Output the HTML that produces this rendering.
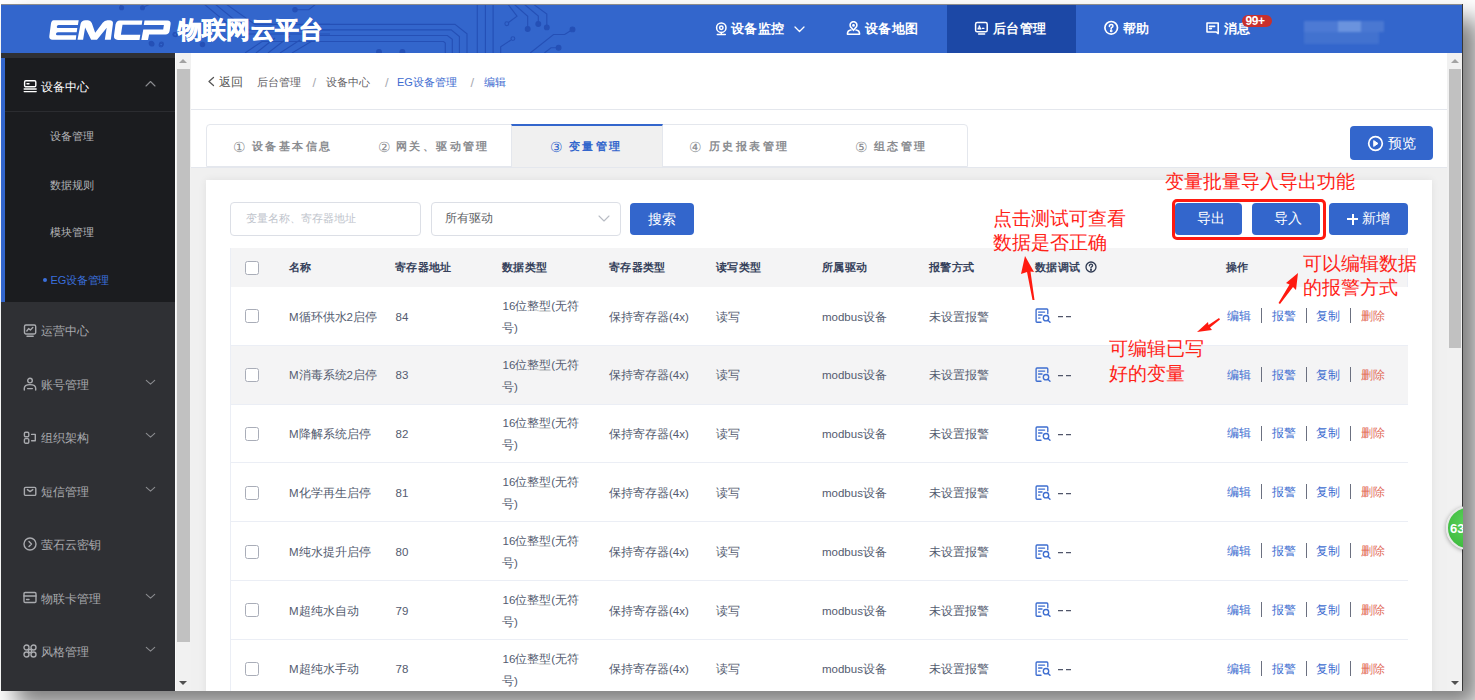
<!DOCTYPE html><html><head><meta charset="utf-8"><style>
*{box-sizing:border-box;margin:0;padding:0}
html,body{width:1475px;height:700px;overflow:hidden;background:#fff;font-family:"Liberation Sans",sans-serif}
.a{position:absolute}
.t{position:absolute;white-space:nowrap;line-height:1}
#shadow{left:1px;top:4px;width:1462px;height:687px;box-shadow:15px 15px 22px rgba(0,0,0,.5);background:#f0f0f0}
#hdr{left:1px;top:4px;width:1462px;height:49px;background:#3366cc;border-top:1px solid #8c8c8c;overflow:hidden}
#rline{left:1462px;top:4px;width:1px;height:687px;background:#383838}
.nav{color:#fff;font-size:12.5px;font-weight:bold;letter-spacing:0.4px}
#side{left:1px;top:53px;width:174px;height:638px;background:#2f3034}
#sub{left:1px;top:58px;width:174px;height:244px;background:#1b1c1f}
#sblue{left:1px;top:58px;width:4px;height:244px;background:#3366cc}
.si{color:#b4b5b8;font-size:11px}
.mi{color:#a9aaae;font-size:12px}
.sb{background:#f1f1f1}
.thumb{background:#c1c1c1}
#bc{left:191px;top:53px;width:1256px;height:57px;background:#fff;border-bottom:1px solid #e4e7ed}
#tabrow{left:191px;top:110px;width:1256px;height:58px;background:#fff;border-bottom:1px solid #e4e7ed}
#card{left:206px;top:180px;width:1226px;height:520px;background:#fff;box-shadow:0 0 8px rgba(0,0,0,.07)}
.tabt{color:#8a8c90;font-size:11px;font-weight:bold;letter-spacing:2.4px}
.btn{position:absolute;background:#3366cc;border-radius:4px;color:#fff}
.th{color:#36415b;font-size:11px;font-weight:bold;letter-spacing:0.3px}
.td{color:#535b6f;font-size:11.5px}
.cb{position:absolute;width:14px;height:14px;border:1px solid #a9adb8;border-radius:2.5px;background:#fff}
.red{color:#ff2318;font-size:19px;font-weight:500}
.op{color:#3d6dd0;font-size:11.5px}
.opd{color:#e26a57;font-size:11.5px}
.vsep{position:absolute;width:1px;height:15px;background:#6b7080}
</style></head><body>
<div id="shadow" class="a"></div>
<div class="a" style="left:0;top:0;width:1463px;height:691px;overflow:hidden">
<div id="hdr" class="a">
<svg class="a" style="left:-1px;top:-5px" width="1463" height="53" viewBox="0 0 1463 53" fill="none" stroke="#2550b6" stroke-width="1.15">
<path d="M204 4 L240 34 L330 34"/><path d="M215 4 L247 30 L330 30"/><path d="M226 4 L255 24.4 L330 24.4"/>
<path d="M245 53 L262 41.5 L323 41.5"/><path d="M256 53 L275 38"/><path d="M268 53 L290 36"/><path d="M280 53 L300 40"/><path d="M292 53 L312 41"/>
<path d="M323 41.5 H443.6 L445.3 43.1 V53"/><path d="M320 35.5 H447.4 L452.3 39.3 V53"/><path d="M320 29.8 H451.2 L459.4 36.6 V53"/><path d="M320 24.4 H455 L467 33.9 V53"/>
<path d="M477.3 4 V53"/><path d="M485.4 4 V53"/><path d="M493.1 4 V53"/>
<path d="M295 9.7 H308.7 L316 4"/>
<path d="M507.8 4 L517 16.2 L508.5 22.5"/><path d="M513.9 4 L527.7 16.2 V29"/><path d="M524 4 L538.3 16 V24"/><path d="M533.2 4 L546.8 14 V27.4"/>
<path d="M530.2 53 L553.5 34.5 H564.7 L572.5 29.4"/><path d="M511 40 L500.7 46.7 V53"/><path d="M544.4 53 L551 47.7 H558.6"/>
<path d="M120 4 L121.6 7.8 M142.5 7.8 L150 4"/>
</svg>
<svg class="a" style="left:-1px;top:-5px" width="1463" height="53" viewBox="0 0 1463 53" fill="#2550b6" stroke="#2550b6" stroke-width="1.1">
<circle cx="527.7" cy="29" r="2.4"/><circle cx="538.3" cy="24" r="2.4"/><circle cx="546.8" cy="27.4" r="2.4"/><circle cx="572.5" cy="29.4" r="2.4"/><circle cx="558.6" cy="47.7" r="2.4"/>
<circle cx="295" cy="9.7" r="2.2"/><circle cx="202.5" cy="44.5" r="2.2"/><circle cx="151.2" cy="43.3" r="2"/><circle cx="152" cy="44" r="2"/><circle cx="121.6" cy="7.8" r="2"/><circle cx="142.5" cy="7.8" r="2"/>
<circle cx="379" cy="52" r="2.4"/><circle cx="402.4" cy="52" r="2.4"/>
<circle cx="506.8" cy="23.7" r="1.9" fill="none"/><circle cx="512.9" cy="38.6" r="1.9" fill="none"/><circle cx="161" cy="45.1" r="1.9" fill="none"/><circle cx="175.6" cy="34.7" r="1.9" fill="none"/><circle cx="174.8" cy="34.4" r="1.9" fill="none"/><circle cx="161.5" cy="44" r="1.9" fill="none"/>
</svg>
<svg class="a" style="left:-1px;top:-5px" width="200" height="53" viewBox="0 0 200 53"><g fill="#fff">
<path d="M53.5 20.3 H78.7 L77.9 25 H58.5 Q57 25 56.8 26.5 Q56.6 28 58 28 H77.3 L76.7 32.2 H57.8 Q56.2 32.2 56 33.7 Q55.8 35.2 57.3 35.2 H76.3 L75.8 39.7 H52.5 Q49 39.7 49.3 36.3 L50.9 24 Q51.5 20.3 53.5 20.3 Z"/>
<path d="M77.5 39.7 L80.6 23.8 Q81.5 20.3 85.5 20.3 H88 Q90.5 20.3 91.8 23 L95.2 32.8 L102.7 22.8 Q104.5 20.3 107.5 20.3 H109.5 Q113.5 20.3 112.9 24 L110.8 39.7 H104.8 L106.7 27.8 L97 39.7 H91.1 L85.1 27.4 L83.1 39.7 Z"/>
<path d="M119.7 20.4 H142.4 L141.7 24.8 H122.5 L120.9 34.7 H140.3 L139.5 39.9 H118 Q113.5 39.9 114 35.5 L115.5 24.6 Q116.5 20.4 119.7 20.4 Z"/>
<path d="M144.5 20.4 H167.5 Q171 20.4 170.6 24 L169.6 31 Q169 34.4 165.5 34.4 H149.1 L148 39.9 H141.3 L143.3 29.6 H163.2 L163.9 25 H143.8 Z"/>
</g></svg>
<div class="t " style="left:177px;top:13.2px;color:#fff;font-weight:700;font-size:24px;letter-spacing:0.2px;-webkit-text-stroke:0.6px #fff">物联网云平台</div>
<div class="a" style="left:946px;top:0;width:129px;height:48px;background:#1c48a6"></div>
</div>
<div id="rline" class="a"></div>
<svg class="a" style="left:715px;top:21px" width="13" height="15" viewBox="0 0 13 15" fill="none" stroke="#fff" stroke-width="1.5" stroke-linecap="round" stroke-linejoin="round"><circle cx="6.3" cy="6.7" r="4.7"/><circle cx="6.3" cy="6.7" r="1.7"/><path d="M6.3 11.4 V13.3 M2.3 13.4 H10.3"/></svg>
<div class="t nav" style="left:731px;top:22.5px;">设备监控</div>
<svg class="a" style="left:794px;top:26px" width="11" height="7" viewBox="0 0 11 7" fill="none" stroke="#fff" stroke-width="1.3" stroke-linecap="round" stroke-linejoin="round"><path d="M1 1 L5.5 5.5 L10 1"/></svg>
<svg class="a" style="left:846px;top:21px" width="15" height="15" viewBox="0 0 15 15" fill="none" stroke="#fff" stroke-width="1.6" stroke-linecap="round" stroke-linejoin="round"><path d="M7.5 9.3 L5.2 6.6 A3.4 3.4 0 1 1 9.8 6.6 Z"/><circle cx="7.5" cy="4.4" r="0.6" fill="#fff"/><path d="M5 9 Q1.5 9.5 1.5 12.5 V13.3 H13.5 V12.5 Q13.5 9.5 10 9"/></svg>
<div class="t nav" style="left:865px;top:22.5px;">设备地图</div>
<svg class="a" style="left:974px;top:21px" width="15" height="15" viewBox="0 0 15 15" fill="none" stroke="#fff" stroke-width="1.5" stroke-linecap="round" stroke-linejoin="round"><rect x="1.6" y="1.6" width="11.6" height="9.2" rx="1.6"/><path d="M4.6 13.1 H10.6"/><circle cx="5.4" cy="5.2" r="0.9" fill="#fff" stroke="none"/><path d="M4 8 Q4 6.6 5.4 6.6 Q6.8 6.6 6.8 8 Z M8.3 7.3 H10" stroke-width="1.2"/></svg>
<div class="t nav" style="left:993px;top:22.5px;">后台管理</div>
<svg class="a" style="left:1103px;top:20px" width="16" height="16" viewBox="0 0 16 16" fill="none" stroke="#fff" stroke-width="1.7" stroke-linecap="round" stroke-linejoin="round"><circle cx="8.2" cy="7.8" r="6.3"/><path d="M6.4 6.4 Q6.4 4.6 8.2 4.6 Q10 4.6 10 6.1 Q10 7.2 8.2 7.9 V8.9" stroke-width="1.5"/><circle cx="8.2" cy="10.9" r="0.5" fill="#fff"/></svg>
<div class="t nav" style="left:1123px;top:22.5px;">帮助</div>
<svg class="a" style="left:1205px;top:21px" width="15" height="15" viewBox="0 0 15 15" fill="none" stroke="#fff" stroke-width="1.6" stroke-linecap="round" stroke-linejoin="round"><path d="M2 2 H13.2 V12.6 L11.2 11 H2 Z"/><path d="M4.6 5.4 H9.6 M4.6 7.6 H6.4"/></svg>
<div class="t nav" style="left:1224px;top:22.5px;">消息</div>
<div class="a" style="left:1242px;top:14.5px;width:30px;height:12.5px;border-radius:6px;background:#c9302c"></div>
<div class="t " style="left:1245.5px;top:14.8px;color:#fff;font-size:12px;font-weight:bold;letter-spacing:-0.4px">99+</div>
<div class="a" style="left:1304px;top:21px;width:80px;height:24px;filter:blur(1px)">
<div class="a" style="left:0;top:0;width:80px;height:11px;background:#4d7ad4"></div>
<div class="a" style="left:34px;top:0;width:23px;height:11px;background:#6a93de"></div>
<div class="a" style="left:57px;top:0;width:23px;height:11px;background:#4a78d2"></div>
<div class="a" style="left:0;top:11px;width:75px;height:12px;background:#4272cf"></div>
</div>
<div id="side" class="a"></div><div id="sub" class="a"></div>
<div class="a" style="left:1px;top:111px;width:174px;height:1px;background:#2b2c30"></div>
<div id="sblue" class="a"></div>
<svg class="a" style="left:23px;top:79px" width="14" height="14" viewBox="0 0 14 14" fill="none" stroke="#fff" stroke-width="1.4" stroke-linecap="round" stroke-linejoin="round"><rect x="1.6" y="1.8" width="11.2" height="6" rx="1.2"/><path d="M4 4.8 H6 M1.2 10 H13.2 M1.2 12.6 H13.2"/></svg>
<div class="t " style="left:41px;top:80.8px;color:#fff;font-size:12px;font-weight:500">设备中心</div>
<svg class="a" style="left:145px;top:80px" width="11" height="7" viewBox="0 0 11 7" fill="none" stroke="#8b8c90" stroke-width="1.1" stroke-linecap="round" stroke-linejoin="round"><path d="M1 6 L5.5 1.5 L10 6"/></svg>
<div class="t si" style="left:50px;top:130.7px;">设备管理</div>
<div class="t si" style="left:50px;top:179.7px;">数据规则</div>
<div class="t si" style="left:50px;top:227.0px;">模块管理</div>
<div class="a" style="left:43px;top:278px;width:4px;height:4px;border-radius:2px;background:#3a6fdc"></div>
<div class="t " style="left:50.5px;top:275.0px;color:#3a6fdc;font-size:11px;letter-spacing:-0.2px">EG设备管理</div>
<svg class="a" style="left:23px;top:323px" width="14" height="14" viewBox="0 0 14 14" fill="none" stroke="#a9aaae" stroke-width="1.4" stroke-linecap="round" stroke-linejoin="round"><rect x="1.5" y="2" width="11.2" height="9" rx="1.4"/><path d="M3.8 8 L5.6 5.6 L7.4 7 L9.8 4.6 M4 13.3 H10.2"/></svg>
<div class="t mi" style="left:41px;top:324.6px;">运营中心</div>
<svg class="a" style="left:23px;top:377px" width="14" height="14" viewBox="0 0 14 14" fill="none" stroke="#a9aaae" stroke-width="1.4" stroke-linecap="round" stroke-linejoin="round"><circle cx="7" cy="3.6" r="2.3"/><path d="M1.3 13 V11.2 Q1.3 7.6 7 7.6 Q12.7 7.6 12.7 11.2 V13 M4.6 11.6 H9.4"/></svg>
<div class="t mi" style="left:41px;top:378.6px;">账号管理</div>
<svg class="a" style="left:145px;top:379px" width="11" height="7" viewBox="0 0 11 7" fill="none" stroke="#8b8c90" stroke-width="1.1" stroke-linecap="round" stroke-linejoin="round"><path d="M1.3 1.4 L5.5 5.1 L9.7 1.4"/></svg>
<svg class="a" style="left:23px;top:430px" width="14" height="14" viewBox="0 0 14 14" fill="none" stroke="#a9aaae" stroke-width="1.4" stroke-linecap="round" stroke-linejoin="round"><rect x="1.4" y="2.2" width="4.4" height="4.6" rx="1.2"/><rect x="1.4" y="8.6" width="4.4" height="4.6" rx="1.2"/><path d="M8.6 4.4 H12.3 V10.8 H8.6"/></svg>
<div class="t mi" style="left:41px;top:431.6px;">组织架构</div>
<svg class="a" style="left:145px;top:432px" width="11" height="7" viewBox="0 0 11 7" fill="none" stroke="#8b8c90" stroke-width="1.1" stroke-linecap="round" stroke-linejoin="round"><path d="M1.3 1.4 L5.5 5.1 L9.7 1.4"/></svg>
<svg class="a" style="left:23px;top:484px" width="14" height="14" viewBox="0 0 14 14" fill="none" stroke="#a9aaae" stroke-width="1.4" stroke-linecap="round" stroke-linejoin="round"><rect x="1.4" y="3.4" width="11.4" height="8" rx="1.2"/><path d="M4.4 5.6 L7.1 7.6 L9.8 5.6"/></svg>
<div class="t mi" style="left:41px;top:485.6px;">短信管理</div>
<svg class="a" style="left:145px;top:486px" width="11" height="7" viewBox="0 0 11 7" fill="none" stroke="#8b8c90" stroke-width="1.1" stroke-linecap="round" stroke-linejoin="round"><path d="M1.3 1.4 L5.5 5.1 L9.7 1.4"/></svg>
<svg class="a" style="left:23px;top:537px" width="14" height="14" viewBox="0 0 14 14" fill="none" stroke="#a9aaae" stroke-width="1.4" stroke-linecap="round" stroke-linejoin="round"><circle cx="7" cy="7" r="6"/><path d="M6 4.5 L8.5 7 L6 9.5"/></svg>
<div class="t mi" style="left:41px;top:538.6px;">萤石云密钥</div>
<svg class="a" style="left:23px;top:591px" width="14" height="14" viewBox="0 0 14 14" fill="none" stroke="#a9aaae" stroke-width="1.4" stroke-linecap="round" stroke-linejoin="round"><rect x="1" y="1.5" width="12" height="10" rx="1.2"/><path d="M1 5 H13 M3.5 8.5 H6"/></svg>
<div class="t mi" style="left:41px;top:592.6px;">物联卡管理</div>
<svg class="a" style="left:145px;top:593px" width="11" height="7" viewBox="0 0 11 7" fill="none" stroke="#8b8c90" stroke-width="1.1" stroke-linecap="round" stroke-linejoin="round"><path d="M1.3 1.4 L5.5 5.1 L9.7 1.4"/></svg>
<svg class="a" style="left:23px;top:644px" width="14" height="14" viewBox="0 0 14 14" fill="none" stroke="#a9aaae" stroke-width="1.4" stroke-linecap="round" stroke-linejoin="round"><circle cx="3.5" cy="3.5" r="2.5"/><circle cx="10.5" cy="3.5" r="2.5"/><circle cx="3.5" cy="10.5" r="2.5"/><circle cx="10.5" cy="10.5" r="2.5"/><rect x="5.5" y="5.5" width="3" height="3"/></svg>
<div class="t mi" style="left:41px;top:645.6px;">风格管理</div>
<svg class="a" style="left:145px;top:646px" width="11" height="7" viewBox="0 0 11 7" fill="none" stroke="#8b8c90" stroke-width="1.1" stroke-linecap="round" stroke-linejoin="round"><path d="M1.3 1.4 L5.5 5.1 L9.7 1.4"/></svg>
<div class="a sb" style="left:175px;top:53px;width:16px;height:638px;border-left:1px solid #fafafa"></div>
<div class="a thumb" style="left:177px;top:69px;width:13px;height:573px"></div>
<div class="a" style="left:179px;top:59px;width:0;height:0;border-left:4px solid transparent;border-right:4px solid transparent;border-bottom:4px solid #a3a3a3"></div>
<div class="a" style="left:179px;top:681px;width:0;height:0;border-left:4px solid transparent;border-right:4px solid transparent;border-top:4px solid #505050"></div>
<div class="a" style="left:191px;top:53px;width:1256px;height:638px;background:#f0f0f0"></div>
<div id="bc" class="a"></div>
<div id="tabrow" class="a"></div>
<svg class="a" style="left:207px;top:76px" width="8" height="11" viewBox="0 0 8 11" fill="none" stroke="#555" stroke-width="1.3" stroke-linecap="round" stroke-linejoin="round"><path d="M6.5 1.5 L2 5.5 L6.5 9.5"/></svg>
<div class="t " style="left:218.5px;top:76.0px;color:#555;font-size:12px">返回</div>
<div class="t " style="left:257px;top:77.0px;color:#5f6064;font-size:11px">后台管理</div>
<div class="t " style="left:312.5px;top:75.5px;color:#a8abb2;font-size:13px">/</div>
<div class="t " style="left:325.5px;top:77.0px;color:#5f6064;font-size:11px">设备中心</div>
<div class="t " style="left:385px;top:75.5px;color:#a8abb2;font-size:13px">/</div>
<div class="t " style="left:397px;top:77.0px;color:#3d6bd0;font-size:11px;letter-spacing:0px">EG设备管理</div>
<div class="t " style="left:470.5px;top:75.5px;color:#a8abb2;font-size:13px">/</div>
<div class="t " style="left:483.5px;top:77.0px;color:#3d6bd0;font-size:11px">编辑</div>
<div class="a" style="left:206px;top:124px;width:762px;height:43px;border:1px solid #e4e7ed;border-radius:4px 4px 0 0;background:#fff"></div>
<div class="a" style="left:511px;top:124px;width:152px;height:43px;background:#f0f0f0;border-top:2px solid #3366cc;border-left:1px solid #e4e7ed;border-right:1px solid #e4e7ed"></div>
<div class="t " style="left:232.5px;top:139.5px;color:#8a8c90;font-size:14px">①</div>
<div class="t tabt" style="left:252px;top:140.5px;color:#8a8c90">设备基本信息</div>
<div class="t " style="left:377.5px;top:139.5px;color:#8a8c90;font-size:14px">②</div>
<div class="t tabt" style="left:396px;top:140.5px;color:#8a8c90">网关、驱动管理</div>
<div class="t " style="left:549.5px;top:139.5px;color:#3366cc;font-size:14px">③</div>
<div class="t tabt" style="left:569px;top:140.5px;color:#3366cc">变量管理</div>
<div class="t " style="left:688.5px;top:139.5px;color:#8a8c90;font-size:14px">④</div>
<div class="t tabt" style="left:709px;top:140.5px;color:#8a8c90">历史报表管理</div>
<div class="t " style="left:854.5px;top:139.5px;color:#8a8c90;font-size:14px">⑤</div>
<div class="t tabt" style="left:874px;top:140.5px;color:#8a8c90">组态管理</div>
<div class="btn" style="left:1350px;top:126px;width:83px;height:34px"></div>
<svg class="a" style="left:1367px;top:135px" width="17" height="17" viewBox="0 0 17 17" fill="none" stroke="#fff" stroke-width="1.7" stroke-linecap="round" stroke-linejoin="round"><circle cx="8.5" cy="8.5" r="6.8"/><path d="M7 5.8 L11 8.5 L7 11.2 Z" fill="#fff" stroke-width="1"/></svg>
<div class="t " style="left:1388px;top:136.0px;color:#fff;font-size:14px">预览</div>
<div id="card" class="a"></div>
<div class="a" style="left:230px;top:202px;width:191px;height:34px;border:1px solid #dcdfe6;border-radius:4px;background:#fff"></div>
<div class="t " style="left:245.5px;top:213.3px;color:#c0c4cc;font-size:11.3px">变量名称、寄存器地址</div>
<div class="a" style="left:431px;top:202px;width:190px;height:34px;border:1px solid #dcdfe6;border-radius:4px;background:#fff"></div>
<div class="t " style="left:445px;top:213.0px;color:#606266;font-size:11.5px">所有驱动</div>
<svg class="a" style="left:598px;top:215px" width="12" height="7" viewBox="0 0 12 7" fill="none" stroke="#b8bcc4" stroke-width="1.1" stroke-linecap="round" stroke-linejoin="round"><path d="M1 1 L6 6 L11 1"/></svg>
<div class="btn" style="left:630px;top:203px;width:64px;height:32px"></div>
<div class="t " style="left:648px;top:212.0px;color:#fff;font-size:14px">搜索</div>
<div class="btn" style="left:1175px;top:203px;width:67px;height:32px"></div>
<div class="t " style="left:1197px;top:211.6px;color:#fff;font-size:13.5px">导出</div>
<div class="btn" style="left:1252px;top:203px;width:68px;height:32px"></div>
<div class="t " style="left:1274px;top:211.6px;color:#fff;font-size:13.5px">导入</div>
<div class="btn" style="left:1329px;top:203px;width:79px;height:32px"></div>
<div class="a" style="left:1347px;top:218px;width:11px;height:2px;background:#fff"></div><div class="a" style="left:1351.5px;top:213.5px;width:2px;height:11px;background:#fff"></div>
<div class="t " style="left:1362px;top:211.6px;color:#fff;font-size:13.5px">新增</div>
<div class="a" style="left:230px;top:248px;width:1178px;height:39px;background:#f4f4f5"></div>
<div class="a" style="left:230px;top:248px;width:1px;height:443px;background:#ebeef5"></div>
<div class="a" style="left:1407px;top:248px;width:1px;height:443px;background:#ebeef5"></div>
<div class="cb" style="left:245px;top:261px"></div>
<div class="t th" style="left:289px;top:262.4px;">名称</div>
<div class="t th" style="left:395px;top:262.4px;">寄存器地址</div>
<div class="t th" style="left:502px;top:262.4px;">数据类型</div>
<div class="t th" style="left:609px;top:262.4px;">寄存器类型</div>
<div class="t th" style="left:716px;top:262.4px;">读写类型</div>
<div class="t th" style="left:822px;top:262.4px;">所属驱动</div>
<div class="t th" style="left:929px;top:262.4px;">报警方式</div>
<div class="t th" style="left:1035px;top:262.4px;">数据调试</div>
<div class="t th" style="left:1226px;top:262.4px;">操作</div>
<svg class="a" style="left:1085.3px;top:261px" width="12" height="12" viewBox="0 0 12 12" fill="none" stroke="#2f3a52" stroke-width="1.3" stroke-linecap="round" stroke-linejoin="round"><circle cx="6" cy="6" r="5"/><path d="M4.4 4.8 Q4.4 3.2 6 3.2 Q7.6 3.2 7.6 4.6 Q7.6 5.6 6 6.3 V7.1"/><circle cx="6" cy="8.9" r="0.4" fill="#2f3a52"/></svg>
<div class="a" style="left:231px;top:287.0px;width:1177px;height:58.8px;background:#fff;border-bottom:1px solid #ebeef5"></div>
<div class="cb" style="left:245px;top:309.4px"></div>
<div class="t td" style="left:289px;top:311.5px;">M循环供水2启停</div>
<div class="t td" style="left:395.5px;top:311.5px;">84</div>
<div class="t td" style="left:502.5px;top:300.8px;">16位整型(无符</div>
<div class="t td" style="left:502px;top:322.7px;">号)</div>
<div class="t td" style="left:609px;top:311.6px;">保持寄存器(4x)</div>
<div class="t td" style="left:715.5px;top:311.6px;">读写</div>
<div class="t td" style="left:822px;top:311.6px;">modbus设备</div>
<div class="t td" style="left:928.5px;top:311.6px;">未设置报警</div>
<svg class="a" style="left:1035px;top:308.4px" width="16" height="16" viewBox="0 0 16 16" fill="none" stroke="#3d6dd0" stroke-width="1.35" stroke-linecap="round" stroke-linejoin="round"><path d="M12.8 5.8 V1.9 Q12.8 1 11.9 1 H2 Q1.1 1 1.1 1.9 V13.4 Q1.1 14.2 2 14.2 H6"/><path d="M3.6 4.1 H9.6 M3.6 7 H7 M3.6 10.1 H5"/><circle cx="11" cy="10.2" r="2.7"/><path d="M12.9 12.2 L15 14.3"/></svg>
<div class="a" style="left:1058px;top:316px;width:5px;height:1px;background:#50566a;box-shadow:0 0.5px 0 rgba(80,86,106,.5)"></div><div class="a" style="left:1066px;top:316px;width:5px;height:1px;background:#50566a;box-shadow:0 0.5px 0 rgba(80,86,106,.5)"></div>
<div class="t op" style="left:1226.5px;top:310.7px;">编辑</div>
<div class="vsep" style="left:1261px;top:307.9px"></div>
<div class="t op" style="left:1271.5px;top:310.7px;">报警</div>
<div class="vsep" style="left:1306px;top:307.9px"></div>
<div class="t op" style="left:1316px;top:310.7px;">复制</div>
<div class="vsep" style="left:1350px;top:307.9px"></div>
<div class="t opd" style="left:1361px;top:310.7px;">删除</div>
<div class="a" style="left:231px;top:345.8px;width:1177px;height:58.8px;background:#f4f4f5;border-bottom:1px solid #ebeef5"></div>
<div class="cb" style="left:245px;top:368.2px"></div>
<div class="t td" style="left:289px;top:370.3px;">M消毒系统2启停</div>
<div class="t td" style="left:395.5px;top:370.3px;">83</div>
<div class="t td" style="left:502.5px;top:359.6px;">16位整型(无符</div>
<div class="t td" style="left:502px;top:381.5px;">号)</div>
<div class="t td" style="left:609px;top:370.4px;">保持寄存器(4x)</div>
<div class="t td" style="left:715.5px;top:370.4px;">读写</div>
<div class="t td" style="left:822px;top:370.4px;">modbus设备</div>
<div class="t td" style="left:928.5px;top:370.4px;">未设置报警</div>
<svg class="a" style="left:1035px;top:367.2px" width="16" height="16" viewBox="0 0 16 16" fill="none" stroke="#3d6dd0" stroke-width="1.35" stroke-linecap="round" stroke-linejoin="round"><path d="M12.8 5.8 V1.9 Q12.8 1 11.9 1 H2 Q1.1 1 1.1 1.9 V13.4 Q1.1 14.2 2 14.2 H6"/><path d="M3.6 4.1 H9.6 M3.6 7 H7 M3.6 10.1 H5"/><circle cx="11" cy="10.2" r="2.7"/><path d="M12.9 12.2 L15 14.3"/></svg>
<div class="a" style="left:1058px;top:375px;width:5px;height:1px;background:#50566a;box-shadow:0 0.5px 0 rgba(80,86,106,.5)"></div><div class="a" style="left:1066px;top:375px;width:5px;height:1px;background:#50566a;box-shadow:0 0.5px 0 rgba(80,86,106,.5)"></div>
<div class="t op" style="left:1226.5px;top:369.5px;">编辑</div>
<div class="vsep" style="left:1261px;top:366.7px"></div>
<div class="t op" style="left:1271.5px;top:369.5px;">报警</div>
<div class="vsep" style="left:1306px;top:366.7px"></div>
<div class="t op" style="left:1316px;top:369.5px;">复制</div>
<div class="vsep" style="left:1350px;top:366.7px"></div>
<div class="t opd" style="left:1361px;top:369.5px;">删除</div>
<div class="a" style="left:231px;top:404.6px;width:1177px;height:58.8px;background:#fff;border-bottom:1px solid #ebeef5"></div>
<div class="cb" style="left:245px;top:427.0px"></div>
<div class="t td" style="left:289px;top:429.1px;">M降解系统启停</div>
<div class="t td" style="left:395.5px;top:429.1px;">82</div>
<div class="t td" style="left:502.5px;top:418.4px;">16位整型(无符</div>
<div class="t td" style="left:502px;top:440.3px;">号)</div>
<div class="t td" style="left:609px;top:429.2px;">保持寄存器(4x)</div>
<div class="t td" style="left:715.5px;top:429.2px;">读写</div>
<div class="t td" style="left:822px;top:429.2px;">modbus设备</div>
<div class="t td" style="left:928.5px;top:429.2px;">未设置报警</div>
<svg class="a" style="left:1035px;top:426.0px" width="16" height="16" viewBox="0 0 16 16" fill="none" stroke="#3d6dd0" stroke-width="1.35" stroke-linecap="round" stroke-linejoin="round"><path d="M12.8 5.8 V1.9 Q12.8 1 11.9 1 H2 Q1.1 1 1.1 1.9 V13.4 Q1.1 14.2 2 14.2 H6"/><path d="M3.6 4.1 H9.6 M3.6 7 H7 M3.6 10.1 H5"/><circle cx="11" cy="10.2" r="2.7"/><path d="M12.9 12.2 L15 14.3"/></svg>
<div class="a" style="left:1058px;top:434px;width:5px;height:1px;background:#50566a;box-shadow:0 0.5px 0 rgba(80,86,106,.5)"></div><div class="a" style="left:1066px;top:434px;width:5px;height:1px;background:#50566a;box-shadow:0 0.5px 0 rgba(80,86,106,.5)"></div>
<div class="t op" style="left:1226.5px;top:428.3px;">编辑</div>
<div class="vsep" style="left:1261px;top:425.5px"></div>
<div class="t op" style="left:1271.5px;top:428.3px;">报警</div>
<div class="vsep" style="left:1306px;top:425.5px"></div>
<div class="t op" style="left:1316px;top:428.3px;">复制</div>
<div class="vsep" style="left:1350px;top:425.5px"></div>
<div class="t opd" style="left:1361px;top:428.3px;">删除</div>
<div class="a" style="left:231px;top:463.4px;width:1177px;height:58.8px;background:#fff;border-bottom:1px solid #ebeef5"></div>
<div class="cb" style="left:245px;top:485.8px"></div>
<div class="t td" style="left:289px;top:487.9px;">M化学再生启停</div>
<div class="t td" style="left:395.5px;top:487.9px;">81</div>
<div class="t td" style="left:502.5px;top:477.2px;">16位整型(无符</div>
<div class="t td" style="left:502px;top:499.1px;">号)</div>
<div class="t td" style="left:609px;top:488.0px;">保持寄存器(4x)</div>
<div class="t td" style="left:715.5px;top:488.0px;">读写</div>
<div class="t td" style="left:822px;top:488.0px;">modbus设备</div>
<div class="t td" style="left:928.5px;top:488.0px;">未设置报警</div>
<svg class="a" style="left:1035px;top:484.79999999999995px" width="16" height="16" viewBox="0 0 16 16" fill="none" stroke="#3d6dd0" stroke-width="1.35" stroke-linecap="round" stroke-linejoin="round"><path d="M12.8 5.8 V1.9 Q12.8 1 11.9 1 H2 Q1.1 1 1.1 1.9 V13.4 Q1.1 14.2 2 14.2 H6"/><path d="M3.6 4.1 H9.6 M3.6 7 H7 M3.6 10.1 H5"/><circle cx="11" cy="10.2" r="2.7"/><path d="M12.9 12.2 L15 14.3"/></svg>
<div class="a" style="left:1058px;top:493px;width:5px;height:1px;background:#50566a;box-shadow:0 0.5px 0 rgba(80,86,106,.5)"></div><div class="a" style="left:1066px;top:493px;width:5px;height:1px;background:#50566a;box-shadow:0 0.5px 0 rgba(80,86,106,.5)"></div>
<div class="t op" style="left:1226.5px;top:487.1px;">编辑</div>
<div class="vsep" style="left:1261px;top:484.3px"></div>
<div class="t op" style="left:1271.5px;top:487.1px;">报警</div>
<div class="vsep" style="left:1306px;top:484.3px"></div>
<div class="t op" style="left:1316px;top:487.1px;">复制</div>
<div class="vsep" style="left:1350px;top:484.3px"></div>
<div class="t opd" style="left:1361px;top:487.1px;">删除</div>
<div class="a" style="left:231px;top:522.2px;width:1177px;height:58.8px;background:#fff;border-bottom:1px solid #ebeef5"></div>
<div class="cb" style="left:245px;top:544.6px"></div>
<div class="t td" style="left:289px;top:546.7px;">M纯水提升启停</div>
<div class="t td" style="left:395.5px;top:546.7px;">80</div>
<div class="t td" style="left:502.5px;top:536.0px;">16位整型(无符</div>
<div class="t td" style="left:502px;top:557.9px;">号)</div>
<div class="t td" style="left:609px;top:546.8px;">保持寄存器(4x)</div>
<div class="t td" style="left:715.5px;top:546.8px;">读写</div>
<div class="t td" style="left:822px;top:546.8px;">modbus设备</div>
<div class="t td" style="left:928.5px;top:546.8px;">未设置报警</div>
<svg class="a" style="left:1035px;top:543.6px" width="16" height="16" viewBox="0 0 16 16" fill="none" stroke="#3d6dd0" stroke-width="1.35" stroke-linecap="round" stroke-linejoin="round"><path d="M12.8 5.8 V1.9 Q12.8 1 11.9 1 H2 Q1.1 1 1.1 1.9 V13.4 Q1.1 14.2 2 14.2 H6"/><path d="M3.6 4.1 H9.6 M3.6 7 H7 M3.6 10.1 H5"/><circle cx="11" cy="10.2" r="2.7"/><path d="M12.9 12.2 L15 14.3"/></svg>
<div class="a" style="left:1058px;top:552px;width:5px;height:1px;background:#50566a;box-shadow:0 0.5px 0 rgba(80,86,106,.5)"></div><div class="a" style="left:1066px;top:552px;width:5px;height:1px;background:#50566a;box-shadow:0 0.5px 0 rgba(80,86,106,.5)"></div>
<div class="t op" style="left:1226.5px;top:545.9px;">编辑</div>
<div class="vsep" style="left:1261px;top:543.1px"></div>
<div class="t op" style="left:1271.5px;top:545.9px;">报警</div>
<div class="vsep" style="left:1306px;top:543.1px"></div>
<div class="t op" style="left:1316px;top:545.9px;">复制</div>
<div class="vsep" style="left:1350px;top:543.1px"></div>
<div class="t opd" style="left:1361px;top:545.9px;">删除</div>
<div class="a" style="left:231px;top:581.0px;width:1177px;height:58.8px;background:#fff;border-bottom:1px solid #ebeef5"></div>
<div class="cb" style="left:245px;top:603.4px"></div>
<div class="t td" style="left:289px;top:605.5px;">M超纯水自动</div>
<div class="t td" style="left:395.5px;top:605.5px;">79</div>
<div class="t td" style="left:502.5px;top:594.8px;">16位整型(无符</div>
<div class="t td" style="left:502px;top:616.7px;">号)</div>
<div class="t td" style="left:609px;top:605.6px;">保持寄存器(4x)</div>
<div class="t td" style="left:715.5px;top:605.6px;">读写</div>
<div class="t td" style="left:822px;top:605.6px;">modbus设备</div>
<div class="t td" style="left:928.5px;top:605.6px;">未设置报警</div>
<svg class="a" style="left:1035px;top:602.4px" width="16" height="16" viewBox="0 0 16 16" fill="none" stroke="#3d6dd0" stroke-width="1.35" stroke-linecap="round" stroke-linejoin="round"><path d="M12.8 5.8 V1.9 Q12.8 1 11.9 1 H2 Q1.1 1 1.1 1.9 V13.4 Q1.1 14.2 2 14.2 H6"/><path d="M3.6 4.1 H9.6 M3.6 7 H7 M3.6 10.1 H5"/><circle cx="11" cy="10.2" r="2.7"/><path d="M12.9 12.2 L15 14.3"/></svg>
<div class="a" style="left:1058px;top:610px;width:5px;height:1px;background:#50566a;box-shadow:0 0.5px 0 rgba(80,86,106,.5)"></div><div class="a" style="left:1066px;top:610px;width:5px;height:1px;background:#50566a;box-shadow:0 0.5px 0 rgba(80,86,106,.5)"></div>
<div class="t op" style="left:1226.5px;top:604.7px;">编辑</div>
<div class="vsep" style="left:1261px;top:601.9px"></div>
<div class="t op" style="left:1271.5px;top:604.7px;">报警</div>
<div class="vsep" style="left:1306px;top:601.9px"></div>
<div class="t op" style="left:1316px;top:604.7px;">复制</div>
<div class="vsep" style="left:1350px;top:601.9px"></div>
<div class="t opd" style="left:1361px;top:604.7px;">删除</div>
<div class="a" style="left:231px;top:639.8px;width:1177px;height:58.8px;background:#fff;border-bottom:1px solid #ebeef5"></div>
<div class="cb" style="left:245px;top:662.2px"></div>
<div class="t td" style="left:289px;top:664.3px;">M超纯水手动</div>
<div class="t td" style="left:395.5px;top:664.3px;">78</div>
<div class="t td" style="left:502.5px;top:653.6px;">16位整型(无符</div>
<div class="t td" style="left:502px;top:675.5px;">号)</div>
<div class="t td" style="left:609px;top:664.4px;">保持寄存器(4x)</div>
<div class="t td" style="left:715.5px;top:664.4px;">读写</div>
<div class="t td" style="left:822px;top:664.4px;">modbus设备</div>
<div class="t td" style="left:928.5px;top:664.4px;">未设置报警</div>
<svg class="a" style="left:1035px;top:661.1999999999999px" width="16" height="16" viewBox="0 0 16 16" fill="none" stroke="#3d6dd0" stroke-width="1.35" stroke-linecap="round" stroke-linejoin="round"><path d="M12.8 5.8 V1.9 Q12.8 1 11.9 1 H2 Q1.1 1 1.1 1.9 V13.4 Q1.1 14.2 2 14.2 H6"/><path d="M3.6 4.1 H9.6 M3.6 7 H7 M3.6 10.1 H5"/><circle cx="11" cy="10.2" r="2.7"/><path d="M12.9 12.2 L15 14.3"/></svg>
<div class="a" style="left:1058px;top:669px;width:5px;height:1px;background:#50566a;box-shadow:0 0.5px 0 rgba(80,86,106,.5)"></div><div class="a" style="left:1066px;top:669px;width:5px;height:1px;background:#50566a;box-shadow:0 0.5px 0 rgba(80,86,106,.5)"></div>
<div class="t op" style="left:1226.5px;top:663.5px;">编辑</div>
<div class="vsep" style="left:1261px;top:660.7px"></div>
<div class="t op" style="left:1271.5px;top:663.5px;">报警</div>
<div class="vsep" style="left:1306px;top:660.7px"></div>
<div class="t op" style="left:1316px;top:663.5px;">复制</div>
<div class="vsep" style="left:1350px;top:660.7px"></div>
<div class="t opd" style="left:1361px;top:663.5px;">删除</div>
<div class="a sb" style="left:1447px;top:53px;width:15px;height:638px"></div>
<div class="a thumb" style="left:1449px;top:69px;width:12px;height:279px"></div>
<div class="a" style="left:1451px;top:59px;width:0;height:0;border-left:4px solid transparent;border-right:4px solid transparent;border-bottom:4px solid #a3a3a3"></div>
<div class="a" style="left:1451px;top:681px;width:0;height:0;border-left:4px solid transparent;border-right:4px solid transparent;border-top:4px solid #505050"></div>
<div class="a" style="left:1446px;top:506px;width:44px;height:44px;border-radius:22px;background:radial-gradient(circle at 50% 40%,#5fd35f,#35b535);border:2px solid #e8e8e8;box-shadow:0 1px 4px rgba(0,0,0,.35)"></div>
<div class="t " style="left:1450px;top:521.5px;color:#fff;font-size:13px;font-weight:bold">63</div>
<div class="t red" style="left:1165px;top:171.5px;">变量批量导入导出功能</div>
<div class="a" style="left:1172px;top:199px;width:154px;height:41px;border:3px solid #ff1a10;border-radius:5px"></div>
<div class="t red" style="left:993px;top:208.5px;">点击测试可查看</div>
<div class="t red" style="left:993px;top:232.5px;">数据是否正确</div>
<div class="t red" style="left:1303px;top:254.0px;">可以编辑数据</div>
<div class="t red" style="left:1303px;top:278.0px;">的报警方式</div>
<div class="t red" style="left:1109px;top:339.0px;">可编辑已写</div>
<div class="t red" style="left:1109px;top:363.5px;">好的变量</div>
<svg class="a" style="left:0;top:0" width="1475" height="700" viewBox="0 0 1475 700">
<g fill="#ff1a10">
<path d="M1025 256 L1034 272 L1030.5 271.5 L1034.5 300 L1032.5 300 L1027 272 L1021 274 Z"/>
<path d="M1298 273 L1296 290 L1293 287 L1280 304 L1278.5 303 L1289.5 284.5 L1286 283 Z"/>
<path d="M1197 332 L1208 322 L1208.5 325 L1219 318 L1220 319.5 L1210 327.5 L1212 330 Z"/>
</g></svg>
<div class="a" style="left:1px;top:691px;width:1462px;height:9px;overflow:hidden"></div>
</div></body></html>
